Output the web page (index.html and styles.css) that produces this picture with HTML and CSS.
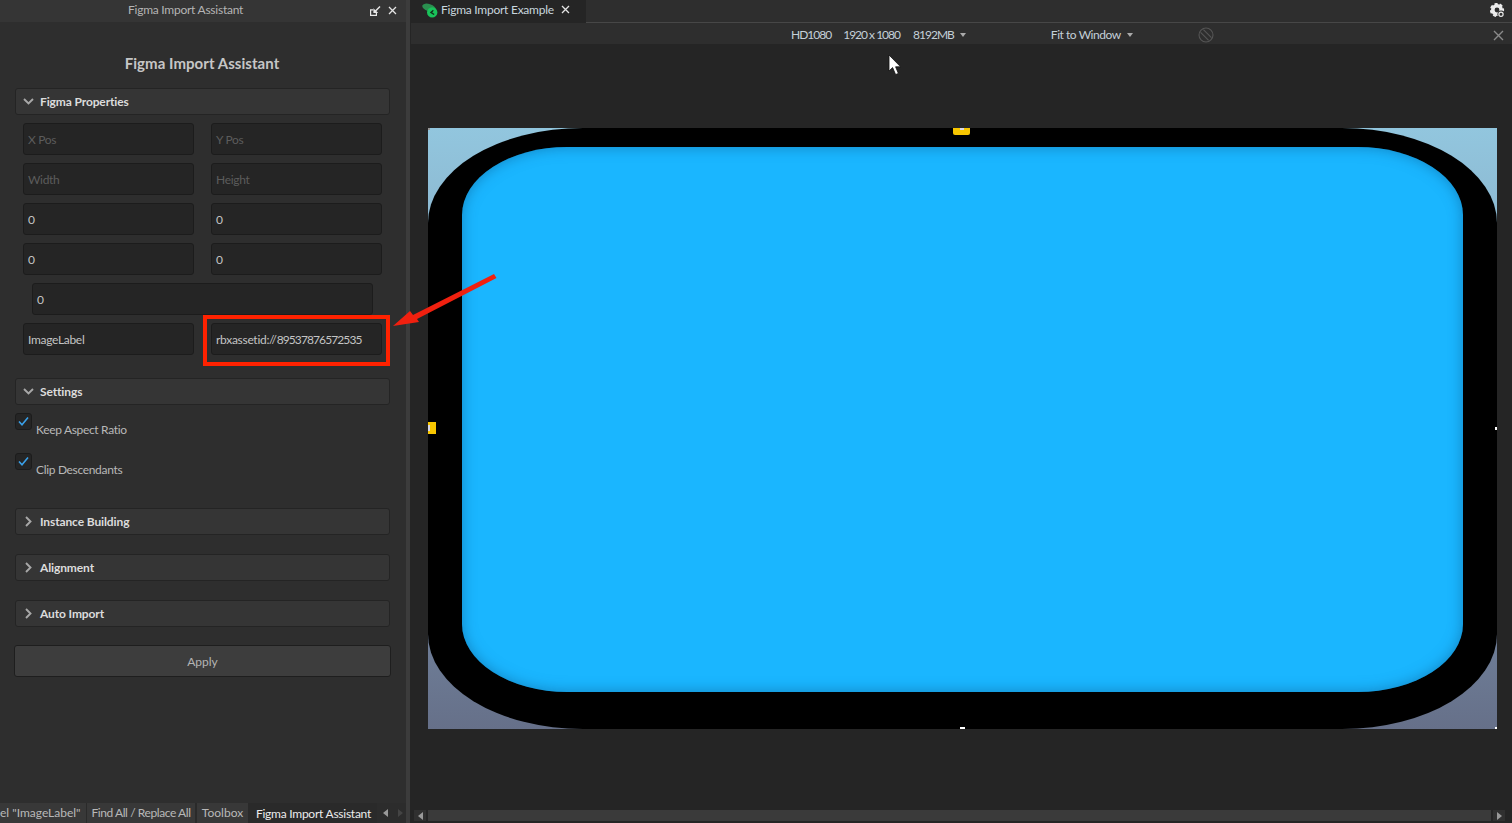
FILE: index.html
```html
<!DOCTYPE html>
<html lang="en">
<head>
<meta charset="utf-8">
<title>Figma Import Assistant</title>
<link rel="stylesheet" href="styles.css">
</head>
<body>
<div class="app">
  <aside class="panel">
    <header class="panel-bar">
      <span class="panel-bar-title">Figma Import Assistant</span>
      <svg class="icon-dock" width="11" height="11" viewBox="0 0 11 11"><path d="M3 3.8H0.6V9.4H6.4V7" fill="none" stroke="#e8e8e8" stroke-width="1.2"/><path d="M3.4 7V2.2L8.2 7Z" fill="#e8e8e8"/><path d="M10 0.6L5 5.6" stroke="#e8e8e8" stroke-width="1.4"/></svg>
      <svg class="icon-close" width="9" height="9" viewBox="0 0 9 9"><path d="M1 1L8 8M8 1L1 8" stroke="#e4e4e4" stroke-width="1.3"/></svg>
    </header>
    <div class="panel-body">
      <h1 class="heading">Figma Import Assistant</h1>
      <div class="section-head"><svg class="chev" width="11" height="7" viewBox="0 0 11 7"><path d="M1 1L5.5 5.5L10 1" fill="none" stroke="#a8a8a8" stroke-width="1.9"/></svg><span>Figma Properties</span></div>
      <div class="fields">
        <div class="row"><div class="field ph">X Pos</div><div class="field ph">Y Pos</div></div>
        <div class="row"><div class="field ph">Width</div><div class="field ph">Height</div></div>
        <div class="row"><div class="field">0</div><div class="field">0</div></div>
        <div class="row"><div class="field">0</div><div class="field">0</div></div>
        <div class="row row-wide"><div class="field">0</div></div>
        <div class="row"><div class="field">ImageLabel</div><div class="field">rbxassetid://<span class="num">89537876572535</span></div></div>
      </div>
      <div class="section-head settings"><svg class="chev" width="11" height="7" viewBox="0 0 11 7"><path d="M1 1L5.5 5.5L10 1" fill="none" stroke="#a8a8a8" stroke-width="1.9"/></svg><span>Settings</span></div>
      <div class="checks">
        <div class="check-row"><span class="box"><svg width="13" height="11" viewBox="0 0 13 11"><path d="M2 5.5L5 8.8L11 1.6" fill="none" stroke="#3aa0e8" stroke-width="1.6"/></svg></span><span class="check-label">Keep Aspect Ratio</span></div>
        <div class="check-row"><span class="box"><svg width="13" height="11" viewBox="0 0 13 11"><path d="M2 5.5L5 8.8L11 1.6" fill="none" stroke="#3aa0e8" stroke-width="1.6"/></svg></span><span class="check-label">Clip Descendants</span></div>
      </div>
      <div class="section-head closed first"><svg class="chev-r" width="7" height="11" viewBox="0 0 7 11"><path d="M1 1L5.5 5.5L1 10" fill="none" stroke="#a8a8a8" stroke-width="1.9"/></svg><span>Instance Building</span></div>
      <div class="section-head closed"><svg class="chev-r" width="7" height="11" viewBox="0 0 7 11"><path d="M1 1L5.5 5.5L1 10" fill="none" stroke="#a8a8a8" stroke-width="1.9"/></svg><span>Alignment</span></div>
      <div class="section-head closed"><svg class="chev-r" width="7" height="11" viewBox="0 0 7 11"><path d="M1 1L5.5 5.5L1 10" fill="none" stroke="#a8a8a8" stroke-width="1.9"/></svg><span>Auto Import</span></div>
      <div class="apply">Apply</div>
    </div>
    <nav class="dock-tabs">
      <div class="dock-tab t-prop"><span class="clip-text">el "ImageLabel"</span></div>
      <div class="dock-tab t-find">Find All / Replace All</div>
      <div class="dock-tab t-tool">Toolbox</div>
      <div class="dock-tab t-active">Figma Import Assistant</div>
      <div class="dock-arrows"><i class="tri-l"></i><i class="tri-r dim"></i></div>
    </nav>
  </aside>
  <div class="splitter"></div>
  <main class="main">
    <div class="tabbar">
      <div class="doc-tab">
        <svg class="doc-logo" width="16" height="15" viewBox="0 0 16 15"><ellipse cx="7" cy="4.6" rx="7" ry="3.6" transform="rotate(18 7 4.6)" fill="#2a8f4f"/><circle cx="10.2" cy="9.4" r="5.2" fill="#19c35a"/><path d="M7.8 9.4L11 6.8L11.7 7.8L10.2 9.4L12.6 11L11.6 12Z" fill="#10301c"/></svg>
        <span class="doc-title">Figma Import Example</span>
        <svg width="9" height="9" viewBox="0 0 9 9"><path d="M1 1L8 8M8 1L1 8" stroke="#e4e4e4" stroke-width="1.3"/></svg>
      </div>
      <svg class="gear" width="15" height="15" viewBox="0 0 15 15"><circle cx="7" cy="7" r="4.2" fill="none" stroke="#ececec" stroke-width="3.6"/><circle cx="7" cy="7" r="6" fill="none" stroke="#ececec" stroke-width="2.2" stroke-dasharray="3 2.03"/><circle cx="11.2" cy="11.4" r="3.8" fill="#2e2e2e"/><circle cx="11" cy="11.2" r="2.1" fill="none" stroke="#ececec" stroke-width="1.2"/></svg>
    </div>
    <div class="toolbar">
      <div class="tool-group">
        <span class="t-num t-hd">HD 1080</span>
        <span class="t-num t-res">1920 x 1080</span>
        <span class="t-num t-mem">8192 MB</span>
        <i class="caret"></i>
        <span class="t-fit">Fit to Window</span>
        <i class="caret"></i>
        <svg class="rotate" width="16" height="16" viewBox="0 0 16 16"><circle cx="8" cy="8" r="7" fill="none" stroke="#555" stroke-width="1.1"/><path d="M2.6 5.4L10.6 13.4M5.4 2.6L13.4 10.6" stroke="#555" stroke-width="1.1"/></svg>
      </div>
      <svg class="tool-close" width="11" height="11" viewBox="0 0 11 11"><path d="M1 1L10 10M10 1L1 10" stroke="#8a8a8a" stroke-width="1.4"/></svg>
    </div>
    <div class="viewport">
      <div class="canvas">
        <div class="frame"><div class="fill"></div></div>
        <i class="handle h-top"></i>
        <i class="handle h-left"></i>
        <i class="dot d-tl"></i><i class="dot d-r"></i><i class="dot d-b"></i><i class="dot d-br"></i><i class="dot d-ht"></i><i class="dot d-hl"></i>
      </div>
      <div class="hscroll"><i class="hs-btn"><i class="tri-l"></i></i><div class="hs-track"></div><i class="hs-btn"><i class="tri-r"></i></i></div>
    </div>
  </main>
</div>
<div class="redbox"></div>
<svg class="arrow" width="106" height="56" viewBox="0 0 106 56"><path d="M0 53L17 38L20 42L101 1L103.5 5L24 46L26 49Z" fill="#f0200f"/></svg>
<svg class="cursor" width="14" height="22" viewBox="0 0 14 22"><path d="M1 1V17L4.6 13.6L7.6 20.6L10.4 19.4L7.6 12.8H12.6Z" fill="#fff" stroke="#111" stroke-width="0.8"/></svg>
</body>
</html>
```
FILE: styles.css
```css
* { box-sizing: border-box; }
html, body { margin: 0; height: 100%; overflow: hidden; }
body { font-family: "Lato", "Noto Sans", sans-serif; font-size: 12px; color: #ccc; background: #252525; position: relative; }
.app { display: flex; width: 1512px; height: 823px; }

.panel { width: 406px; height: 823px; background: #2e2e2e; display: flex; flex-direction: column; flex: none; }
.panel-bar { height: 22px; background: #353535; display: flex; align-items: center; position: relative; flex: none; }
.panel-bar-title { position: absolute; left: 128px; top: 2px; line-height: 15px; color: #b4b4b4; letter-spacing: -0.25px; }
.icon-dock { position: absolute; left: 370px; top: 6px; }
.icon-close { position: absolute; left: 388px; top: 6px; }
.panel-body { flex: 1; display: flex; flex-direction: column; }
.heading { margin: 31px 0 15px; height: 20px; line-height: 20px; font-size: 15px; font-weight: 700; text-align: center; width: 404px; color: #c6c6c6; letter-spacing: 0.05px; }
.section-head { margin-left: 15px; width: 375px; height: 27px; flex: none; background: #353535; border: 1px solid #242424; border-radius: 3px; display: flex; align-items: center; font-weight: 700; color: #dcdcdc; padding-left: 7px; letter-spacing: -0.12px; }
.section-head span { margin-left: 6px; }
.chev-r { margin: 0 2px 0 2px; }
.section-head.closed { margin-top: 19px; }
.section-head.first { margin-top: 30px; }
.fields { display: flex; flex-direction: column; gap: 8px; margin: 8px 0 23px 23px; }
.row { display: flex; gap: 17px; }
.row-wide { padding-left: 9px; }
.row-wide .field { width: 341px; }
.field { width: 171px; height: 32px; background: #252525; border: 1px solid #1c1c1c; border-radius: 3px; display: flex; align-items: center; padding-left: 4px; color: #c4c4c4; letter-spacing: -0.3px; white-space: pre; }
.field.ph { color: #5c5c5c; }
.num { letter-spacing: -0.9px; }
.checks { display: flex; flex-direction: column; gap: 15px; margin: 8px 0 0 15px; }
.check-row { display: flex; height: 25px; }
.box { width: 17px; height: 17px; background: #252525; border: 1px solid #1c1c1c; border-radius: 3px; display: flex; align-items: center; justify-content: center; flex: none; }
.check-label { margin: 9px 0 0 4px; line-height: 16px; color: #b8b8b8; letter-spacing: -0.33px; }
.apply { margin: 18px 0 0 14px; width: 377px; height: 32px; background: #3d3d3d; border: 1px solid #1e1e1e; border-radius: 3px; display: flex; align-items: center; justify-content: center; color: #b4b4b4; }

.dock-tabs { height: 20px; background: #2a2a2a; display: flex; flex: none; }
.dock-tab { height: 20px; line-height: 19px; background: #383838; color: #b8b8b8; white-space: nowrap; text-align: center; flex: none; overflow: hidden; }
.t-prop { width: 86px; text-align: right; padding-right: 6px; }
.clip-text { display: inline-block; }
.t-find { width: 108px; margin-left: 1px; letter-spacing: -0.42px; }
.t-tool { width: 51px; margin-left: 2px; }
.t-active { width: 127px; margin-left: 2px; background: #2a2a2a; color: #ececec; line-height: 21px; letter-spacing: -0.25px; }
.dock-arrows { flex: 1; display: flex; align-items: center; gap: 10px; padding-left: 6px; background: #2c2c2c; }
.tri-l, .tri-r { display: block; width: 0; height: 0; border-top: 4px solid transparent; border-bottom: 4px solid transparent; }
.tri-l { border-right: 5px solid #999; }
.tri-r { border-left: 5px solid #999; }
.tri-r.dim { border-left-color: #444; }

.splitter { width: 5px; flex: none; background: linear-gradient(to right, #3c3c3c 0, #3c3c3c 4px, #252525 4px); }
.main { flex: 1; display: flex; flex-direction: column; min-width: 0; }
.tabbar { height: 23px; flex: none; background: #2e2e2e; border-bottom: 1px solid #474747; display: flex; align-items: flex-start; justify-content: space-between; }
.doc-tab { width: 175px; height: 23px; background: #252525; display: flex; align-items: center; padding: 0 0 5px 11px; color: #c8d6de; margin-bottom: -1px; position: relative; letter-spacing: -0.25px; }
.doc-logo { margin-top: 3px; }
.doc-title { margin: 0 7px 0 3px; }
.gear { margin: 3px 7px 0 0; }
.toolbar { height: 21px; flex: none; background: #2e2e2e; display: flex; align-items: center; position: relative; padding-top: 2px; }
.tool-group { display: flex; align-items: center; margin-left: 380px; color: #c4d0d8; }
.t-num { letter-spacing: -1px; }
.t-hd, .t-mem { word-spacing: -2px; }
.t-res { margin-left: 12px; }
.t-mem { margin-left: 13px; }
.caret { width: 0; height: 0; margin-left: 6px; border-left: 3.5px solid transparent; border-right: 3.5px solid transparent; border-top: 4px solid #aaa; }
.t-fit { margin-left: 85px; letter-spacing: -0.45px; }
.rotate { margin-left: 65px; }
.tool-close { position: absolute; right: 8px; top: 7px; }

.viewport { flex: 1; background: #252525; padding: 84px 0 0 17px; position: relative; }
.canvas { width: 1069px; height: 601px; position: relative; background: linear-gradient(to bottom, #92c6de 0%, #7f99b4 55%, #667089 100%); }
.frame { width: 100%; height: 100%; background: #000; border-radius: 155px / 95px; padding: 19px 34px 37px 34px; }
.fill { width: 100%; height: 100%; background: #1ab6ff; border-radius: 105px / 68px; box-shadow: inset 0 0 14px rgba(10, 80, 130, 0.5); }
.handle { position: absolute; background: #f7c600; }
.h-top { left: 525px; top: 0; width: 17px; height: 7px; border-radius: 0 0 2px 2px; }
.h-left { left: 0; top: 294px; width: 8px; height: 12px; }
.dot { position: absolute; background: #fff; }
.d-tl { left: 0; top: 0; width: 2px; height: 2px; background: #999; }
.d-r { right: 0; top: 299px; width: 2px; height: 3px; }
.d-b { left: 532px; bottom: 0; width: 5px; height: 2px; }
.d-br { right: 0; bottom: 0; width: 2px; height: 2px; }
.d-ht { left: 532px; top: 0; width: 4px; height: 2px; background: #d8d8e8; }
.d-hl { left: 0; top: 297px; width: 2px; height: 6px; background: #d8d8e8; }
.hscroll { position: absolute; left: 3px; right: 7px; bottom: 2px; height: 11px; display: flex; gap: 2px; }
.hs-btn { width: 12px; background: #303030; display: flex; align-items: center; justify-content: center; flex: none; }
.hs-track { flex: 1; background: #3a3a3a; }

.redbox { position: absolute; left: 203px; top: 315px; width: 187px; height: 51px; border: 4px solid #ff2200; }
.arrow { position: absolute; left: 393px; top: 273px; }
.cursor { position: absolute; left: 888px; top: 54px; }
```
